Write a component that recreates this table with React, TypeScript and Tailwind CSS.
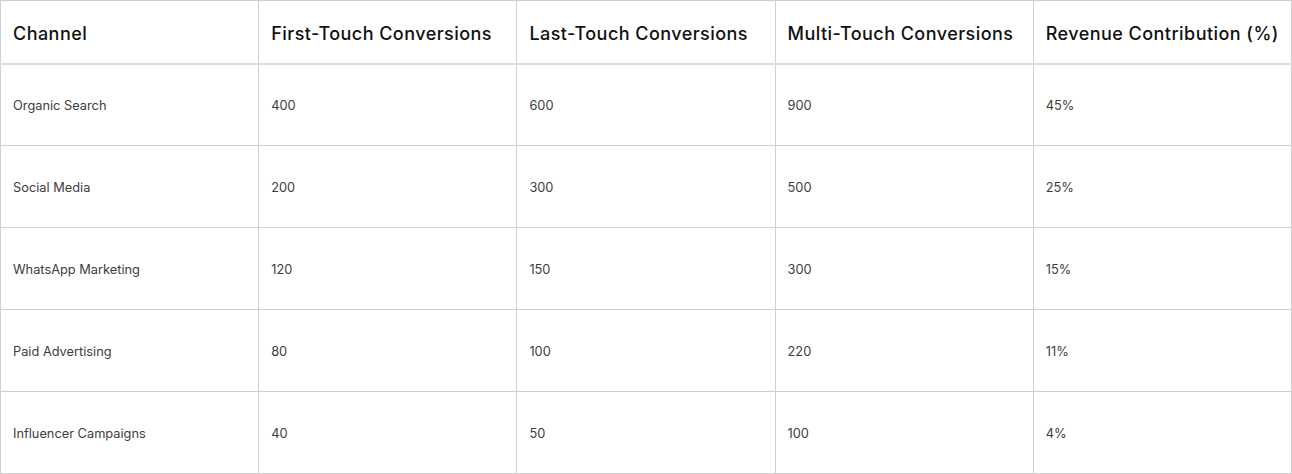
const headers = [
  'Channel',
  'First-Touch Conversions',
  'Last-Touch Conversions',
  'Multi-Touch Conversions',
  'Revenue Contribution (%)',
];

const rows = [
  ['Organic Search', '400', '600', '900', '45%'],
  ['Social Media', '200', '300', '500', '25%'],
  ['WhatsApp Marketing', '120', '150', '300', '15%'],
  ['Paid Advertising', '80', '100', '220', '11%'],
  ['Influencer Campaigns', '40', '50', '100', '4%'],
];

export default function App() {
  return (
    <div className="w-[1292px] bg-white" style={{ fontFamily: 'Inter, "Noto Sans", sans-serif' }}>
      <table className="w-full table-fixed border-collapse border border-[#cfcfcf]">
        <thead>
          <tr className="border-b-2 border-[#dedede]">
            {headers.map((h) => (
              <th
                key={h}
                className="h-[63px] border-r border-[#cfcfcf] px-3 pt-[3px] text-left text-[18px] font-medium tracking-[0.45px] text-[#111] last:border-r-0"
              >
                {h}
              </th>
            ))}
          </tr>
        </thead>
        <tbody>
          {rows.map((row) => (
            <tr key={row[0]} className="border-b border-[#cfcfcf]">
              {row.map((cell, i) => (
                <td
                  key={i}
                  className="h-[82px] border-r border-[#cfcfcf] px-3 pt-[2px] text-[12.8px] text-[#3d3d3d] last:border-r-0"
                >
                  {cell}
                </td>
              ))}
            </tr>
          ))}
        </tbody>
      </table>
    </div>
  );
}
